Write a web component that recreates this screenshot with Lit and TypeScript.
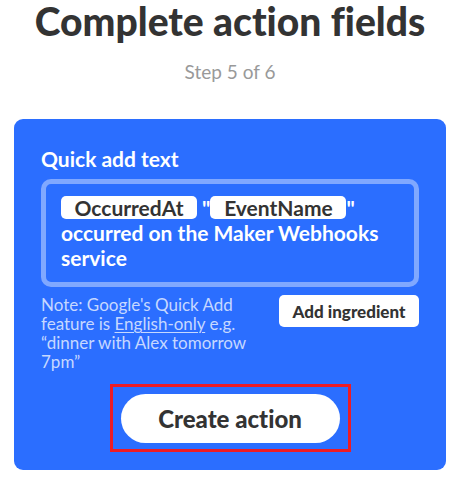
import { LitElement, html, css } from "lit";
import { customElement } from "lit/decorators.js";

@customElement("app-root")
class AppRoot extends LitElement {
  static styles = css`
    :host {
      display: block;
      background: #fff;
      color: #333;
      font-family: Lato, "Open Sans", sans-serif;
      font-variant-ligatures: none;
    }
    * {
      box-sizing: border-box;
    }
    main {
      padding: 0 18px 12px 14px;
    }
    header {
      text-align: center;
    }
    h1 {
      margin: 0;
      font-size: 39px;
      font-weight: 900;
      line-height: 42px;
    }
    .step {
      margin: 18px 0 0;
      color: #999;
      font-size: 19px;
      line-height: 24px;
    }
    .card {
      display: flex;
      flex-direction: column;
      margin-top: 35px;
      padding: 28px 27px 18px;
      border-radius: 9px;
      background: #2b6eff;
      color: #fff;
    }
    .label {
      font-size: 21px;
      font-weight: 700;
      line-height: 24px;
    }
    .field {
      min-height: 108px;
      margin-top: 8px;
      padding: 11px 15px 8px;
      border: 5px solid #80a8ff;
      border-radius: 10px;
      outline: none;
      font-size: 21px;
      font-weight: 700;
      line-height: 25px;
    }
    .chip {
      display: inline-block;
      min-width: 136px;
      padding: 0 12px;
      border-radius: 5px;
      background: #fff;
      color: #333;
      line-height: 23px;
      text-align: center;
    }
    .below {
      display: flex;
      justify-content: space-between;
      align-items: flex-start;
      gap: 24px;
      margin-top: 8px;
    }
    .note {
      flex: 0 1 212px;
      margin: 0;
      color: #c6d8ff;
      font-size: 17px;
      line-height: 19px;
    }
    a {
      color: inherit;
      text-decoration-thickness: 1px;
      text-underline-offset: 2px;
    }
    button {
      border: 0;
      background: #fff;
      color: #333;
      font-family: inherit;
      font-variant-ligatures: inherit;
      font-weight: 900;
      white-space: nowrap;
      cursor: pointer;
    }
    .add {
      flex: none;
      height: 32px;
      min-width: 140px;
      padding: 0 10px;
      border-radius: 5px;
      font-size: 17px;
    }
    .highlight {
      align-self: center;
      margin-top: 13px;
      padding: 7px 8px 6px;
      border: 3px solid #ed1c24;
    }
    .create {
      display: block;
      height: 49px;
      min-width: 219px;
      padding: 0 32px;
      border-radius: 25px;
      font-size: 24px;
    }
  `;

  render() {
    return html`
      <main>
        <header>
          <h1>Complete action fields</h1>
          <p class="step">Step 5 of 6</p>
        </header>
        <form class="card" @submit=${(e: Event) => e.preventDefault()}>
          <span class="label" id="quick-add">Quick add text</span>
          <div
            class="field"
            role="textbox"
            aria-multiline="true"
            aria-labelledby="quick-add"
            aria-describedby="note"
            contenteditable="true"
            spellcheck="false"
          ><span class="chip" contenteditable="false">OccurredAt</span> "<span class="chip" contenteditable="false">EventName</span>" occurred on the Maker Webhooks service</div>
          <div class="below">
            <p class="note" id="note">
              Note: Google's Quick Add feature is <a href="#english-only">English-only</a> e.g.
              “dinner with Alex tomorrow 7pm”
            </p>
            <button class="add" type="button">Add ingredient</button>
          </div>
          <div class="highlight">
            <button class="create" type="submit">Create action</button>
          </div>
        </form>
      </main>
    `;
  }
}
